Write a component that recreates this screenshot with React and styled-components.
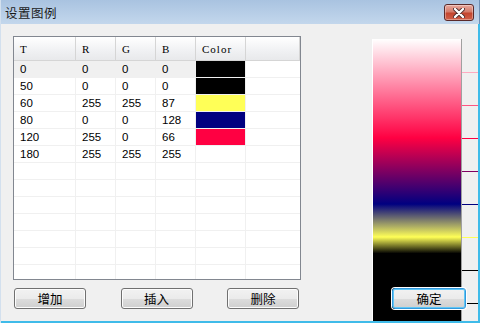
import React from "react";
import styled, { createGlobalStyle } from "styled-components";

const GlobalStyle = createGlobalStyle`
  html, body {
    margin: 0;
    padding: 0;
    background: #f0f0f0;
  }
  * {
    box-sizing: border-box;
  }
`;

const Window = styled.div`
  width: 480px;
  height: 323px;
  display: flex;
  flex-direction: column;
  overflow: hidden;
  background: #f0f0f0;
  border-left: 1px solid #d3e0ee;
  font-family: "Liberation Sans", "Noto Sans CJK SC", sans-serif;
`;

const TitleBar = styled.div`
  height: 24px;
  flex: none;
  display: flex;
  align-items: center;
  justify-content: space-between;
  padding: 0 5px 0 4px;
  background: linear-gradient(#a9c3e0, #c3d7ec);
  border-right: 1px solid #6f8fb4;

  h1 {
    margin: 0;
    font-family: "Noto Sans CJK SC", sans-serif;
    font-size: 12.5px;
    font-weight: 400;
    color: #1a1a1a;
    letter-spacing: 0.5px;
  }
`;

const CloseButton = styled.div`
  width: 30px;
  height: 17px;
  margin-top: 1px;
  border: 1px solid #5a2a2a;
  border-radius: 3px;
  background: linear-gradient(#e9a99e 0%, #d47b6a 45%, #c4452e 55%, #d0604a 100%);
  box-shadow: inset 0 0 0 1px rgba(255, 255, 255, 0.35);
  display: flex;
  align-items: center;
  justify-content: center;
`;

const Body = styled.div`
  flex: 1;
  display: flex;
  overflow: hidden;
  border-right: 2px solid #3fbbe9;
  border-bottom: 2px solid #3fbbe9;
`;

const LeftPane = styled.div`
  width: 288px;
  margin-left: 12px;
  padding-top: 12px;
  display: flex;
  flex-direction: column;
`;

const Table = styled.div`
  height: 244px;
  border: 1px solid #828790;
  background: #fff;
  overflow: hidden;
  display: grid;
  grid-template-columns: 62px 40px 40px 40px 50px 1fr;
  grid-auto-rows: 17px;
  grid-template-rows: 24px;
`;

const HeadCell = styled.div`
  display: flex;
  align-items: center;
  padding-left: 6px;
  font-family: "Liberation Serif", "DejaVu Serif", serif;
  font-size: 11px;
  letter-spacing: 1px;
  color: #000;
  background: linear-gradient(#ffffff, #f1f2f4 55%, #e8e9eb);
  border-right: 1px solid #d5d5d5;
  border-bottom: 1px solid #d5d5d5;

  &:last-child {
    border-right: none;
  }
`;

const Cell = styled.div`
  display: flex;
  align-items: center;
  padding-left: ${(p) => (p.$swatch ? 0 : 6)}px;
  font-size: 11.5px;
  color: #000;
  background: ${(p) => p.$swatch || (p.$current ? "#f0f0f0" : "#fff")};
  border-right: ${(p) => (p.$last ? "none" : "1px solid #f0f0f0")};
  border-bottom: 1px solid #f0f0f0;
`;

const ButtonRow = styled.div`
  margin: 8px 0 0 1px;
  width: 285px;
  display: flex;
  justify-content: space-between;
`;

const Button = styled.button`
  width: 72px;
  height: 21px;
  padding: 0;
  border: 1px solid #707070;
  border-radius: 3px;
  background: linear-gradient(#f2f2f2 0%, #ebebeb 50%, #dddddd 50%, #cfcfcf 100%);
  box-shadow: inset 0 0 0 1px #fcfcfc;
  font-family: "Noto Sans CJK SC", sans-serif;
  font-size: 12.5px;
  line-height: 18px;
  color: #000;
`;

const DefaultButton = styled(Button)`
  position: absolute;
  left: 20px;
  top: 264px;
  width: 74px;
  border-color: #3399dd;
  box-shadow: inset 0 0 0 1px #5fc6f5, 0 0 0 1px #fff;
`;

const RightPane = styled.div`
  position: relative;
  margin-left: 71px;
  padding-top: 15px;
  display: flex;
  align-items: flex-start;
`;

const Strip = styled.div`
  width: 90px;
  height: 297px;
  flex: none;
  border-left: 1px solid #fff;
  border-right: 1px solid #a0a0a0;
  background: linear-gradient(
    to bottom,
    #ffffff 0%,
    #ff0042 33.33%,
    #000080 55.56%,
    #ffff57 66.67%,
    #000000 72.22%,
    #000000 100%
  );
`;

const columns = ["T", "R", "G", "B", "Color", ""];

const rows = [
  [0, 0, 0, 0],
  [50, 0, 0, 0],
  [60, 255, 255, 87],
  [80, 0, 0, 128],
  [120, 255, 0, 66],
  [180, 255, 255, 255],
];

const hex = (v) => v.toString(16).padStart(2, "0");

const ticks = [
  { y: 33, color: "#ffaac0" },
  { y: 66, color: "#ff5581" },
  { y: 99, color: "#ff0042" },
  { y: 132, color: "#800061" },
  { y: 165, color: "#000080" },
  { y: 198, color: "#ffff57" },
  { y: 231, color: "#000000" },
  { y: 264, color: "#000000" },
];

function Scale() {
  return (
    <svg width="16" height="297" style={{ flex: "none" }}>
      {ticks.map((t) => (
        <line key={t.y} x1="0" x2="16" y1={t.y + 0.5} y2={t.y + 0.5} stroke={t.color} strokeWidth="1" />
      ))}
    </svg>
  );
}

function CloseIcon() {
  return (
    <svg width="12" height="10" viewBox="0 0 12 10">
      <path d="M2 1 L10 9 M10 1 L2 9" stroke="#4a2a2a" strokeWidth="4" strokeLinecap="round" />
      <path d="M2 1 L10 9 M10 1 L2 9" stroke="#fff" strokeWidth="2.4" strokeLinecap="round" />
    </svg>
  );
}

export default function App() {
  const emptyRows = 7;

  return (
    <>
      <GlobalStyle />
      <Window>
        <TitleBar>
          <h1>设置图例</h1>
          <CloseButton>
            <CloseIcon />
          </CloseButton>
        </TitleBar>
        <Body>
          <LeftPane>
            <Table>
              {columns.map((c, i) => (
                <HeadCell key={i}>{c}</HeadCell>
              ))}
              {rows.map((r, ri) => {
                const filled = r[0] !== 180;
                const color = `#${hex(r[1])}${hex(r[2])}${hex(r[3])}`;
                return (
                  <React.Fragment key={ri}>
                    {r.map((v, ci) => (
                      <Cell key={ci} $current={ri === 0}>
                        {v}
                      </Cell>
                    ))}
                    {filled ? <Cell $swatch={color} /> : <Cell />}
                    <Cell $last />
                  </React.Fragment>
                );
              })}
              {Array.from({ length: emptyRows }).map((_, ri) => (
                <React.Fragment key={`e${ri}`}>
                  {columns.map((_, ci) => (
                    <Cell key={ci} $last={ci === columns.length - 1} />
                  ))}
                </React.Fragment>
              ))}
            </Table>
            <ButtonRow>
              <Button>增加</Button>
              <Button>插入</Button>
              <Button>删除</Button>
            </ButtonRow>
          </LeftPane>
          <RightPane>
            <Strip />
            <Scale />
            <DefaultButton>确定</DefaultButton>
          </RightPane>
        </Body>
      </Window>
    </>
  );
}
